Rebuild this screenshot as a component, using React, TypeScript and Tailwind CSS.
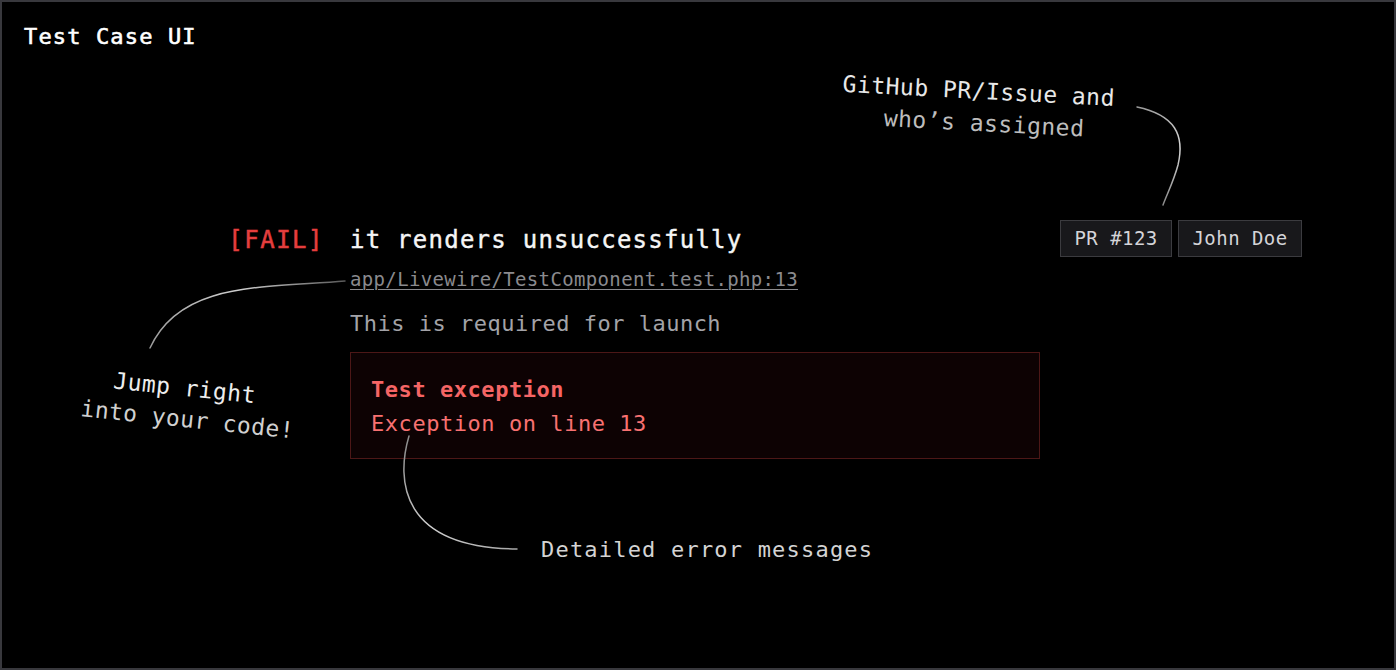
import React from "react";

function Curves() {
  return (
    <svg
      className="absolute left-0 top-0 pointer-events-none"
      width={1392}
      height={666}
      viewBox="2 2 1392 666"
      fill="none"
    >
      <defs>
        <linearGradient id="g1" x1="1137" y1="107" x2="1163" y2="205" gradientUnits="userSpaceOnUse">
          <stop offset="0" stopColor="#9a9a9a" />
          <stop offset="0.5" stopColor="#d8d8d8" />
          <stop offset="1" stopColor="#8a8a8a" />
        </linearGradient>
        <linearGradient id="g2" x1="345" y1="281" x2="150" y2="348" gradientUnits="userSpaceOnUse">
          <stop offset="0" stopColor="#5a5a5a" />
          <stop offset="0.5" stopColor="#cfcfcf" />
          <stop offset="1" stopColor="#9a9a9a" />
        </linearGradient>
        <linearGradient id="g3" x1="409" y1="436" x2="517" y2="549" gradientUnits="userSpaceOnUse">
          <stop offset="0" stopColor="#8a8a8a" />
          <stop offset="0.5" stopColor="#d0d0d0" />
          <stop offset="1" stopColor="#a8a8a8" />
        </linearGradient>
      </defs>
      <path
        d="M1137,107 C1175,115 1185,135 1178,165 C1174,180 1168,192 1163,205"
        stroke="url(#g1)"
        strokeWidth={1.5}
        strokeLinecap="round"
      />
      <path d="M345,281 C260,288 180,282 150,348" stroke="url(#g2)" strokeWidth={1.5} strokeLinecap="round" />
      <path d="M409,436 C396,480 400,548 517,549" stroke="url(#g3)" strokeWidth={1.5} strokeLinecap="round" />
    </svg>
  );
}

export default function App() {
  return (
    <div className="relative w-[1396px] h-[670px] border-2 border-[#38383d] bg-black overflow-hidden font-['DejaVu_Sans_Mono',monospace] px-[22px] pt-[20px]">
      <Curves />

      {/* Title */}
      <div className="text-[22px] leading-[30px] tracking-[1.15px] text-white [-webkit-text-stroke:0.6px_currentColor]">
        Test Case UI
      </div>

      {/* Main */}
      <div className="mt-[168px] flex pr-[70px]">
        <div className="w-[300px] shrink-0 flex justify-end h-[37px] items-center pt-[3px]">
          <span className="text-[24px] leading-[37px] tracking-[1.5px] text-[#e53e3e] [-webkit-text-stroke:0.5px_currentColor]">
            [FAIL]
          </span>
        </div>
        <div className="ml-[26px] flex-1 flex flex-col">
          <div className="flex items-center justify-between h-[37px]">
            <span className="pt-[3px] text-[24px] leading-[37px] tracking-[1.25px] text-[#f5f5f5] [-webkit-text-stroke:0.4px_currentColor]">
              it renders unsuccessfully
            </span>
            <div className="flex gap-[6px]">
              <span className="h-[37px] flex items-center px-[13.4px] border border-[#3b3b3f] bg-[#18181b] text-[19px] tracking-[0.45px] text-[#d4d4d8]">
                PR #123
              </span>
              <span className="h-[37px] flex items-center px-[13.4px] border border-[#3b3b3f] bg-[#18181b] text-[19px] tracking-[0.45px] text-[#d4d4d8]">
                John Doe
              </span>
            </div>
          </div>
          <a className="mt-[10px] self-start text-[19px] leading-[24px] tracking-[0.35px] text-[#8a8a8e] underline underline-offset-[3px] decoration-1">
            app/Livewire/TestComponent.test.php:13
          </a>
          <div className="mt-[18px] text-[22px] leading-[30px] tracking-[0.5px] text-[#a3a3a8]">
            This is required for launch
          </div>
          <div className="mt-[13px] w-[690px] border border-[#4c1717] bg-[#0d0203] pl-[20px] pt-[20px] pb-[17px]">
            <div className="text-[22px] leading-[34px] tracking-[0.55px] font-bold text-[#f56565]">Test exception</div>
            <div className="text-[22px] leading-[34px] tracking-[0.55px] text-[#f87171]">Exception on line 13</div>
          </div>
        </div>
      </div>

      {/* Annotations */}
      <div className="absolute left-[978px] top-[105px] -translate-x-1/2 -translate-y-1/2 rotate-[3deg] text-center text-[23px] leading-[32px] tracking-[0.5px] whitespace-nowrap">
        <div className="text-[#e8e8e8] pr-[4px]">GitHub PR/Issue and</div>
        <div className="text-[#bdbdbd] pl-[10px]">who’s assigned</div>
      </div>

      <div className="absolute left-[184px] top-[402px] -translate-x-1/2 -translate-y-1/2 rotate-[6deg] text-center text-[23px] leading-[31px] tracking-[0.45px] whitespace-nowrap">
        <div className="text-[#ededed] pr-[6px]">Jump right</div>
        <div className="text-[#d0d0d0] pl-[6px]">into your code!</div>
      </div>

      <div className="absolute left-[539px] top-[533px] text-[22px] leading-[30px] tracking-[1.2px] text-[#d4d4d4] whitespace-nowrap">
        Detailed error messages
      </div>
    </div>
  );
}
